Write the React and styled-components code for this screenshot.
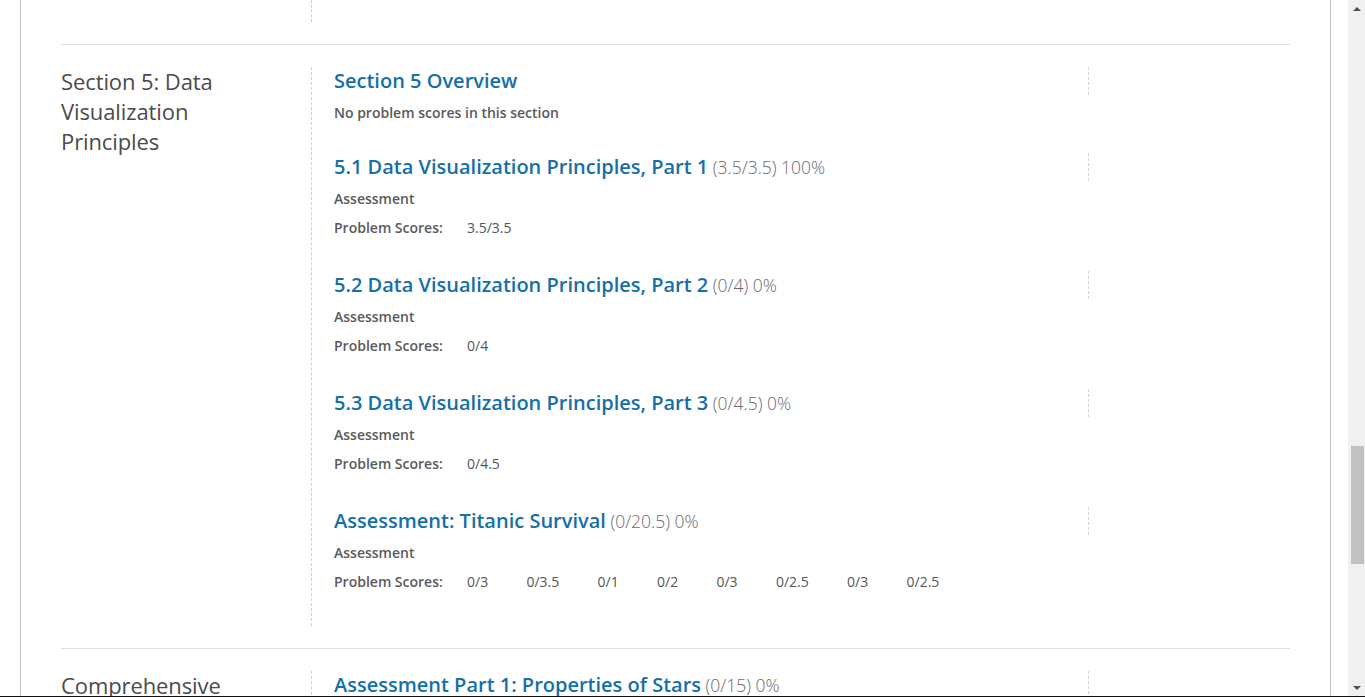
import React from 'react'
import styled, { createGlobalStyle } from 'styled-components';

const GlobalStyle = createGlobalStyle`
  html, body { margin:0; padding:0; height:100%; overflow:hidden; background:#fff; }
  body { font-family:"Open Sans", "Noto Sans", "Liberation Sans", sans-serif; }
`;

const subsections = [
  { title: 'Section 5 Overview', overview: true },
  { title: '5.1 Data Visualization Principles, Part 1', score: '(3.5/3.5) 100%', problems: ['3.5/3.5'] },
  { title: '5.2 Data Visualization Principles, Part 2', score: '(0/4) 0%', problems: ['0/4'] },
  { title: '5.3 Data Visualization Principles, Part 3', score: '(0/4.5) 0%', problems: ['0/4.5'] },
  { title: 'Assessment: Titanic Survival', score: '(0/20.5) 0%', problems: ['0/3','0/3.5','0/1','0/2','0/3','0/2.5','0/3','0/2.5'] },
];

const Progress = () => {
  return (
    <Screen>
      <GlobalStyle/>
      <Window>
        <Viewport>
          <Wrapper>
            <Chapter first>
              <ChapterName/>
              <Sections style={{ height: "22px" }}/>
            </Chapter>
            <Chapter>
              <ChapterName>Section 5: Data Visualization Principles</ChapterName>
              <Sections>
                {subsections.map((s) => (
                  <Subsection key={s.title} overview={s.overview}>
                    <SubTitle>
                      <TitleLink href="#">{s.title}</TitleLink>
                      {s.score && <Score> {s.score}</Score>}
                    </SubTitle>
                    {s.overview ? (
                      <Detail>No problem scores in this section</Detail>
                    ) : (
                      <>
                        <Detail>Assessment</Detail>
                        <ScoreRow>
                          <ScoreLabel>Problem Scores:</ScoreLabel>
                          {s.problems.map((p, i) => <ProblemScore key={i}>{p}</ProblemScore>)}
                        </ScoreRow>
                      </>
                    )}
                  </Subsection>
                ))}
              </Sections>
            </Chapter>
            <Chapter>
              <ChapterName>Comprehensive Assessment</ChapterName>
              <Sections>
                <Subsection>
                  <SubTitle>
                    <TitleLink href="#">Assessment Part 1: Properties of Stars</TitleLink>
                    <Score> (0/15) 0%</Score>
                  </SubTitle>
                  <Detail>Assessment</Detail>
                </Subsection>
              </Sections>
            </Chapter>
          </Wrapper>
        </Viewport>
        <Scrollbar>
          <Arrow up/>
          <Track>
            <Thumb/>
          </Track>
          <Arrow/>
        </Scrollbar>
      </Window>
      <Taskbar/>
    </Screen>
  )
}

const Screen = styled.div`
  height:697px;
  display:flex;
  flex-direction:column;
`;
const Window = styled.div`
  flex:1;
  display:flex;
  min-height:0;
`;
const Viewport = styled.div`
  flex:1;
  overflow:hidden;
`;
const Wrapper = styled.div`
  margin:0 17px 0 20px;
  border-left:1px solid #c4c4c4;
  border-right:1px solid #c4c4c4;
  padding:0 40px;
  min-height:100%;
  box-sizing:border-box;
`;
const Chapter = styled.section`
  display:flex;
  padding:${p => p.first ? '0' : '22px'} 0 22px;
  border-top:${p => p.first ? 'none' : '1px solid #dedede'};
`;
const ChapterName = styled.h2`
  width:250px;
  flex:none;
  margin:-1px 0 0;
  font-size:22px;
  line-height:30px;
  font-weight:400;
  color:#4b4b4b;
  letter-spacing:-0.1px;
  padding-right:30px;
  box-sizing:border-box;
`;
const Sections = styled.div`
  flex:1;
  border-left:1px dashed #cfcfcf;
  padding-left:22px;
`;
const Subsection = styled.div`
  padding-bottom:${p => p.overview ? '30px' : '33px'};
  &:last-child{ padding-bottom:34px; }
`;
const SubTitle = styled.h3`
  margin:0;
  width:754px;
  height:28px;
  line-height:28px;
  border-right:1px dashed #d4d4d4;
  white-space:nowrap;
`;
const TitleLink = styled.a`
  font-size:20px;
  font-weight:600;
  color:#166fa6;
  text-decoration:none;
`;
const Score = styled.span`
  font-size:17.5px;
  font-weight:300;
  color:#6a6a6a;
`;
const Detail = styled.p`
  margin:8px 0 0;
  font-size:14px;
  line-height:20px;
  font-weight:600;
  color:#5a5a5a;
`;
const ScoreRow = styled.div`
  display:flex;
  align-items:baseline;
  margin-top:9px;
  line-height:20px;
`;
const ScoreLabel = styled.span`
  width:133px;
  flex:none;
  font-size:14px;
  font-weight:600;
  color:#5a5a5a;
`;
const ProblemScore = styled.span`
  font-size:14px;
  color:#555;
  margin-right:38.3px;
`;
const Scrollbar = styled.div`
  width:17px;
  flex:none;
  background:#f0f0f0;
  display:flex;
  flex-direction:column;
`;
const Arrow = styled.div`
  height:17px;
  display:flex;
  justify-content:center;
  align-items:center;
  &::after{
    content:"";
    border-left:4px solid transparent;
    border-right:4px solid transparent;
    ${p => p.up ? 'border-bottom:4px solid #505050;' : 'border-top:4px solid #505050;'}
  }
`;
const Track = styled.div`
  flex:1;
  padding-top:429px;
`;
const Thumb = styled.div`
  margin-left:3px;
  width:13px;
  height:118px;
  background:#c1c1c1;
`;
const Taskbar = styled.div`
  height:1px;
  background:#111;
`;

export default Progress;
